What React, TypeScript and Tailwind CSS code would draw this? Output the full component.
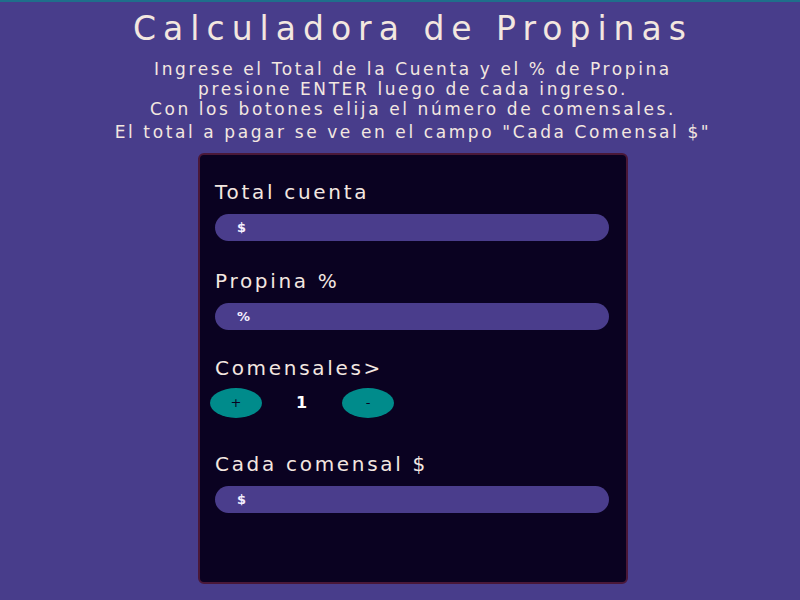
export default function App() {
  const field = (label: string, sign: string) => (
    <div className="flex flex-col">
      <p className="text-[20px] leading-[24px] tracking-[2.7px] text-[#f3e7e0]">{label}</p>
      <div className="mt-[10px] flex h-[27px] w-[394px] items-center rounded-full bg-[#4a3d8c] pl-[22px] text-[13px] font-bold text-[#f4efff]">
        {sign}
      </div>
    </div>
  );

  return (
    <div
      className="min-h-[600px] w-[800px] overflow-hidden border-t-2 border-[#1f6f8b] bg-[#483d8b] pl-[26px] text-[#f3e7e0]"
      style={{ fontFamily: '"DejaVu Sans", "Noto Sans", sans-serif' }}
    >
      <div className="flex flex-col items-center">
        <h1 className="mt-[7px] whitespace-nowrap text-[33px] leading-[40px] tracking-[7px]">Calculadora de Propinas</h1>
        <div className="mt-[10px] whitespace-nowrap text-center text-[17px] leading-[20px] tracking-[2.6px]">
          <p>Ingrese el Total de la Cuenta y el % de Propina</p>
          <p>presione ENTER luego de cada ingreso.</p>
          <p>Con los botones elija el número de comensales.</p>
          <p className="mt-[3px]">El total a pagar se ve en el campo "Cada Comensal $"</p>
        </div>
        <div className="mt-[11px] flex h-[431px] w-[430px] flex-col rounded-[6px] border-2 border-[#4a1838] bg-[#0a0221] px-[15px] pt-[25px]">
          {field("Total cuenta", "$")}
          <div className="mt-[28px]">{field("Propina %", "%")}</div>
          <p className="mt-[26px] text-[20px] leading-[24px] tracking-[2.7px]">Comensales&gt;</p>
          <div className="mt-[8px] flex items-center">
            <button className="-ml-[5px] flex h-[30px] w-[52px] items-center justify-center rounded-[50%] bg-[#008b8b] text-[13px] text-[#0a0221]">
              +
            </button>
            <span className="ml-[34px] w-[12px] text-[16px] font-bold text-white">1</span>
            <button className="ml-[34px] flex h-[30px] w-[52px] items-center justify-center rounded-[50%] bg-[#008b8b] text-[13px] text-[#0a0221]">
              -
            </button>
          </div>
          <div className="mt-[34px]">{field("Cada comensal $", "$")}</div>
        </div>
      </div>
    </div>
  );
}
